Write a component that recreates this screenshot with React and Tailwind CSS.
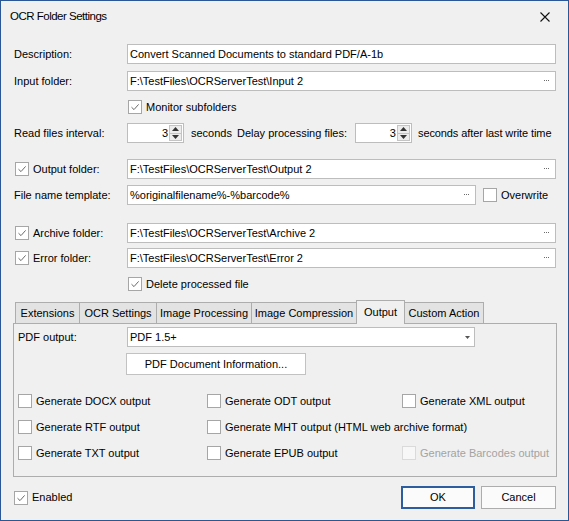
import { useState } from "react";

// small building blocks for the classic windows dialog look
function CheckBox({ checked, disabled }) {
  return (
    <span
      className={
        "flex h-[14px] w-[14px] shrink-0 items-center justify-center border " +
        (disabled ? "border-[#dadada] bg-[#f7f7f7]" : "border-[#a6a6a6] bg-white")
      }
    >
      {checked && (
        <svg width="10" height="10" viewBox="0 0 10 10">
          <path d="M1.5 5.2 L4 7.6 L8.6 2.4" fill="none" stroke="#6a6a6a" strokeWidth="1" />
        </svg>
      )}
    </span>
  );
}

function Check({ label, checked, disabled, className = "" }) {
  return (
    <label className={"flex h-[20px] items-center gap-[4px] " + className}>
      <CheckBox checked={checked} disabled={disabled} />
      <span className={disabled ? "text-[#a3a3a3]" : ""}>{label}</span>
    </label>
  );
}

function Dots() {
  return (
    <svg width="6" height="2" viewBox="0 0 6 2" className="shrink-0">
      <rect x="0" y="0" width="1" height="1" fill="#6b6b6b" />
      <rect x="2" y="0" width="1" height="1" fill="#6b6b6b" />
      <rect x="4" y="0" width="1" height="1" fill="#6b6b6b" />
    </svg>
  );
}

function TextBox({ value, browse, className = "" }) {
  return (
    <div
      className={
        "flex h-[20px] items-center border border-[#bdbdbd] bg-white pl-[2px] pr-[5px] " + className
      }
    >
      <span className="flex-1 truncate">{value}</span>
      {browse && <Dots />}
    </div>
  );
}

function Spin({ value }) {
  return (
    <div className="flex h-[20px] w-[57px] shrink-0 border border-[#bdbdbd] bg-white">
      <span className="flex-1 pr-[1px] text-right leading-[18px]">{value}</span>
      <div className="my-[1px] mr-[1px] flex w-[13px] flex-col border border-[#c4c4c4] bg-[#ececec]">
        <div className="flex flex-1 items-center justify-center border-b border-[#c4c4c4]">
          <svg width="7" height="4" viewBox="0 0 7 4">
            <path d="M0 4 L3.5 0 L7 4 Z" fill="#333" />
          </svg>
        </div>
        <div className="flex flex-1 items-center justify-center">
          <svg width="7" height="4" viewBox="0 0 7 4">
            <path d="M0 0 L3.5 4 L7 0 Z" fill="#333" />
          </svg>
        </div>
      </div>
    </div>
  );
}

const tabs = [
  { name: "Extensions", w: "w-[65px]" },
  { name: "OCR Settings", w: "w-[78px]" },
  { name: "Image Processing", w: "w-[96px]" },
  { name: "Image Compression", w: "w-[106px]" },
  { name: "Output", w: "w-[49px]" },
  { name: "Custom Action", w: "w-[80px]" },
];

export default function App() {
  const [active, setActive] = useState("Output");

  return (
    <div
      className="flex h-[521px] w-[569px] flex-col overflow-hidden whitespace-nowrap border border-[#2b5797] bg-[#f0f0f0] text-[11px] text-black"
      style={{ fontFamily: '"Liberation Sans", Arial, sans-serif' }}
    >
      {/* title bar */}
      <div className="flex h-[31px] shrink-0 items-center justify-between pl-[9px] pr-[18px]">
        <span className="text-[11.5px] tracking-[-0.5px]">OCR Folder Settings</span>
        <svg width="10" height="10" viewBox="0 0 10 10">
          <path d="M0.5 0.5 L9.5 9.5 M9.5 0.5 L0.5 9.5" stroke="#111" strokeWidth="1.1" />
        </svg>
      </div>

      <div className="flex flex-1 flex-col pl-[13px] pr-[12px]">
        <div className="mt-[12px] flex items-center">
          <span className="w-[113px] shrink-0">Description:</span>
          <TextBox value="Convert Scanned Documents to standard PDF/A-1b" className="flex-1" />
        </div>

        <div className="mt-[7px] flex items-center">
          <span className="w-[113px] shrink-0">Input folder:</span>
          <TextBox value="F:\TestFiles\OCRServerTest\Input 2" browse className="flex-1" />
        </div>

        <Check label="Monitor subfolders" checked className="mt-[6px] ml-[114px]" />

        <div className="mt-[6px] flex h-[20px] items-center">
          <span className="w-[113px] shrink-0">Read files interval:</span>
          <Spin value="3" />
          <span className="ml-[7px] shrink-0">seconds</span>
          <span className="ml-[5px] w-[118px] shrink-0">Delay processing files:</span>
          <Spin value="3" />
          <span className="ml-[6px] shrink-0 tracking-[-0.1px]">seconds after last write time</span>
        </div>

        <div className="mt-[16px] flex items-center">
          <Check label="Output folder:" checked className="ml-[1px] w-[112px] shrink-0" />
          <TextBox value="F:\TestFiles\OCRServerTest\Output 2" browse className="flex-1" />
        </div>

        <div className="mt-[6px] flex items-center">
          <span className="w-[113px] shrink-0">File name template:</span>
          <TextBox value="%originalfilename%-%barcode%" browse className="w-[349px] shrink-0" />
          <Check label="Overwrite" className="ml-[7px]" />
        </div>

        <div className="mt-[18px] flex items-center">
          <Check label="Archive folder:" checked className="ml-[1px] w-[112px] shrink-0" />
          <TextBox value="F:\TestFiles\OCRServerTest\Archive 2" browse className="flex-1" />
        </div>

        <div className="mt-[5px] flex items-center">
          <Check label="Error folder:" checked className="ml-[1px] w-[112px] shrink-0" />
          <TextBox value="F:\TestFiles\OCRServerTest\Error 2" browse className="flex-1" />
        </div>

        <Check label="Delete processed file" checked className="mt-[6px] ml-[114px]" />

        {/* tab strip */}
        <div className="relative z-10 mt-[6px] ml-[1px] flex h-[23px] items-end">
          {tabs.map((t) =>
            t.name === active ? (
              <div
                key={t.name}
                className={
                  t.w +
                  " -mb-[1px] -ml-[1px] flex h-[24px] shrink-0 items-start justify-center border border-b-0 border-[#adadad] bg-[#f0f0f0] pt-[3px]"
                }
              >
                {t.name}
              </div>
            ) : (
              <div
                key={t.name}
                onClick={() => setActive(t.name)}
                className={
                  t.w +
                  " -ml-[1px] flex h-[21px] shrink-0 items-center justify-center border border-b-0 border-[#adadad] bg-[#e3e3e3] first:ml-0"
                }
              >
                {t.name}
              </div>
            )
          )}
        </div>

        {/* tab page */}
        <div className="-ml-[1px] flex h-[154px] w-[544px] shrink-0 flex-col border border-[#adadad]">
          <div className="mt-[3px] flex items-center pl-[4px]">
            <span className="w-[109px] shrink-0">PDF output:</span>
            <div className="flex h-[20px] w-[348px] items-center border border-[#bdbdbd] bg-white pl-[2px] pr-[4px]">
              <span className="flex-1">PDF 1.5+</span>
              <svg width="5" height="3" viewBox="0 0 5 3">
                <path d="M0 0 L2.5 3 L5 0 Z" fill="#555" />
              </svg>
            </div>
          </div>

          <div className="mt-[6px] pl-[112px]">
            <button className="h-[22px] w-[180px] border border-[#c2c2c2] bg-white">
              PDF Document Information...
            </button>
          </div>

          <div className="mt-[16px] grid grid-cols-[189px_195px_1fr] gap-y-[6px] pl-[4px]">
            <Check label="Generate DOCX output" />
            <Check label="Generate ODT output" />
            <Check label="Generate XML output" />
            <Check label="Generate RTF output" />
            <Check label="Generate MHT output (HTML web archive format)" className="col-span-2" />
            <Check label="Generate TXT output" />
            <Check label="Generate EPUB output" />
            <Check label="Generate Barcodes output" disabled />
          </div>
        </div>

        {/* footer */}
        <div className="mt-[9px] flex h-[23px] items-center">
          <Check label="Enabled" checked />
          <div className="ml-auto flex gap-[6px]">
            <button className="h-[23px] w-[74px] border-2 border-[#2c5d9f] bg-[#fbfbfb]">OK</button>
            <button className="h-[23px] w-[75px] border border-[#adadad] bg-[#fbfbfb]">Cancel</button>
          </div>
        </div>
      </div>
    </div>
  );
}
